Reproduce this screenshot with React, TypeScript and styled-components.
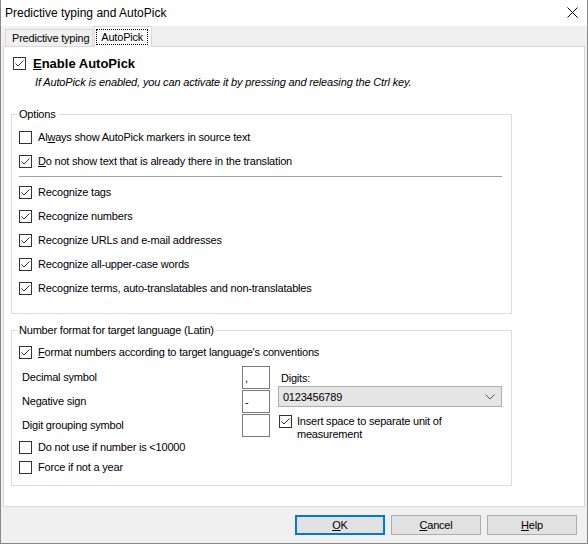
import React from 'react';
import styled, { createGlobalStyle } from 'styled-components';

const GlobalStyle = createGlobalStyle`
  html, body {
    margin: 0;
    padding: 0;
    background: #fff;
  }
  body {
    font-family: "Liberation Sans", Arial, sans-serif;
    font-size: 11px;
    letter-spacing: -0.2px;
    color: #000;
  }
  * {
    box-sizing: border-box;
  }
`;

const Window = styled.div`
  width: 588px;
  height: 544px;
  display: flex;
  flex-direction: column;
  background: #f0f0f0;
  border: 1px solid #888;
  border-top: none;
`;

const TitleBar = styled.div`
  flex: none;
  height: 26px;
  background: #fff;
  display: flex;
  align-items: center;
  justify-content: space-between;
  padding: 0 9px 1px 4px;
  font-size: 12px;
  letter-spacing: 0;
`;

const TabStrip = styled.div`
  flex: none;
  height: 21px;
  margin-bottom: -1px;
  position: relative;
  z-index: 1;
  display: flex;
  align-items: flex-end;
  gap: 1px;
  padding-left: 4px;
`;

const Tab = styled.div<{ $active?: boolean }>`
  display: flex;
  align-items: center;
  white-space: nowrap;
  border: 1px solid #d9d9d9;
  border-bottom: none;
  background: ${p => (p.$active ? '#fff' : '#f0f0f0')};
  height: ${p => (p.$active ? '21px' : '17px')};
  margin-bottom: ${p => (p.$active ? '0' : '1px')};
  padding: ${p => (p.$active ? '2px 3px 3px 1px' : '0 3px 1px 6px')};
`;

const FocusLabel = styled.span`
  display: flex;
  align-items: center;
  height: 16px;
  padding: 0 4px;
  border: 1px dotted #000;
  align-self: flex-start;
`;

const Panel = styled.div`
  flex: none;
  height: 461px;
  margin: 0 2px;
  background: #fff;
  border: 1px solid #d9d9d9;
  padding-top: 8px;
`;

const EnableRow = styled.div`
  display: flex;
  align-items: center;
  gap: 7px;
  height: 17px;
  padding-left: 9px;
  font-size: 13px;
  letter-spacing: 0;
  font-weight: bold;
`;

const Hint = styled.div`
  margin: 3px 0 0 31px;
  line-height: 14px;
  font-style: italic;
  letter-spacing: -0.15px;
`;

const Group = styled.fieldset<{ $gap: number; $bottom: number }>`
  margin: ${p => p.$gap}px 0 0 7px;
  width: 501px;
  border: 1px solid #dcdcdc;
  padding: ${p => (p.$gap > 10 ? 4 : 3)}px 9px ${p => p.$bottom}px 7px;
  min-width: 0;
`;

const Legend = styled.legend`
  padding: 0 2px;
  margin-left: -2px;
  line-height: 14px;
`;

const CheckRow = styled.label<{ $h?: number }>`
  display: flex;
  align-items: center;
  gap: 6px;
  height: ${p => p.$h ?? 24}px;
`;

const Separator = styled.div`
  height: 1px;
  background: #a0a0a0;
  margin: 3px 0 3px 0;
`;

const Box = styled.span`
  flex: none;
  width: 13px;
  height: 13px;
  border: 1px solid #333;
  background: #fff;
  display: flex;
`;

const FormatArea = styled.div`
  display: flex;
  margin-top: 1px;
`;

const LeftCol = styled.div`
  width: 252px;
  display: flex;
  flex-direction: column;
`;

const FieldRow = styled.div`
  display: flex;
  align-items: center;
  justify-content: space-between;
  height: 24px;
  padding-left: 3px;
`;

const SymbolBox = styled.div`
  width: 28px;
  height: 23px;
  border: 1px solid #7a7a7a;
  background: #fff;
  padding: 3px 0 0 2px;
  line-height: 16px;
`;

const RightCol = styled.div`
  width: 225px;
  margin-left: 8px;
  display: flex;
  flex-direction: column;
`;

const DigitsLabel = styled.div`
  margin-top: 6px;
  padding-left: 3px;
  line-height: 14px;
`;

const Combo = styled.div`
  margin-top: 1px;
  height: 21px;
  border: 1px solid #adadad;
  background: #e5e5e5;
  display: flex;
  align-items: center;
  justify-content: space-between;
  padding: 0 6px 0 4px;
`;

const WrapRow = styled.label`
  display: flex;
  align-items: flex-start;
  gap: 5px;
  margin: 8px 0 0 1px;
  line-height: 13px;
`;

const Footer = styled.div`
  flex: 1;
  display: flex;
  justify-content: flex-end;
  align-items: flex-start;
  gap: 6px;
  padding: 8px 10px 0 0;
`;

const Button = styled.button<{ $default?: boolean }>`
  width: 90px;
  height: 20px;
  padding: 0;
  font: inherit;
  letter-spacing: inherit;
  color: #000;
  background: #e1e1e1;
  border: ${p => (p.$default ? '2px solid #0078d7' : '1px solid #adadad')};
`;

const Check: React.FC<{ on?: boolean }> = ({ on }) => (
  <Box>
    {on && (
      <svg width="11" height="11" viewBox="0 0 11 11">
        <polyline points="1.5,5.5 4,8 9.5,2.5" fill="none" stroke="#333" strokeWidth="1" />
      </svg>
    )}
  </Box>
);

const optionsTop = [
  { on: false, label: <>Al<u>w</u>ays show AutoPick markers in source text</> },
  { on: true, label: <><u>D</u>o not show text that is already there in the translation</> },
];

const optionsBottom = [
  'Recognize tags',
  'Recognize numbers',
  'Recognize URLs and e-mail addresses',
  'Recognize all-upper-case words',
  'Recognize terms, auto-translatables and non-translatables',
];

const symbols = [
  { label: 'Decimal symbol', value: ',' },
  { label: 'Negative sign', value: '-' },
  { label: 'Digit grouping symbol', value: '' },
];

export default function App() {
  return (
    <>
      <GlobalStyle />
      <Window>
        <TitleBar>
          <span>Predictive typing and AutoPick</span>
          <svg width="11" height="11" viewBox="0 0 11 11">
            <path d="M0.5 0.5L10.5 10.5M10.5 0.5L0.5 10.5" stroke="#000" strokeWidth="1" />
          </svg>
        </TitleBar>

        <TabStrip>
          <Tab>Predictive typing</Tab>
          <Tab $active>
            <FocusLabel>AutoPick</FocusLabel>
          </Tab>
        </TabStrip>

        <Panel>
          <EnableRow>
            <Check on />
            <span><u>E</u>nable AutoPick</span>
          </EnableRow>
          <Hint>If AutoPick is enabled, you can activate it by pressing and releasing the Ctrl key.</Hint>

          <Group $gap={18} $bottom={13}>
            <Legend>Options</Legend>
            {optionsTop.map((o, i) => (
              <CheckRow key={i}>
                <Check on={o.on} />
                <span>{o.label}</span>
              </CheckRow>
            ))}
            <Separator />
            {optionsBottom.map(label => (
              <CheckRow key={label}>
                <Check on />
                <span>{label}</span>
              </CheckRow>
            ))}
          </Group>

          <Group $gap={9} $bottom={8}>
            <Legend>Number format for target language (Latin)</Legend>
            <CheckRow>
              <Check on />
              <span><u>F</u>ormat numbers according to target language's conventions</span>
            </CheckRow>
            <FormatArea>
              <LeftCol>
                {symbols.map(s => (
                  <FieldRow key={s.label}>
                    <span>{s.label}</span>
                    <SymbolBox>{s.value}</SymbolBox>
                  </FieldRow>
                ))}
                <CheckRow $h={20}>
                  <Check />
                  <span>Do not use if number is &lt;10000</span>
                </CheckRow>
                <CheckRow $h={20}>
                  <Check />
                  <span>Force if not a year</span>
                </CheckRow>
              </LeftCol>
              <RightCol>
                <DigitsLabel>Digits:</DigitsLabel>
                <Combo>
                  <span>0123456789</span>
                  <svg width="10" height="6" viewBox="0 0 10 6">
                    <polyline points="0.5,0.5 5,5 9.5,0.5" fill="none" stroke="#555" strokeWidth="1" />
                  </svg>
                </Combo>
                <WrapRow>
                  <Check on />
                  <span>Insert space to separate unit of<br />measurement</span>
                </WrapRow>
              </RightCol>
            </FormatArea>
          </Group>
        </Panel>

        <Footer>
          <Button $default><u>O</u>K</Button>
          <Button><u>C</u>ancel</Button>
          <Button><u>H</u>elp</Button>
        </Footer>
      </Window>
    </>
  );
}
